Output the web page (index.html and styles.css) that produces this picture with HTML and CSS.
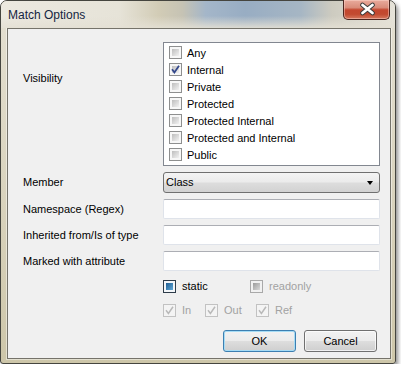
FILE: index.html
```html
<!DOCTYPE html>
<html lang="en">
	<head>
		<meta charset="UTF-8" />
		<title>Match Options</title>
		<link rel="stylesheet" href="styles.css">
	</head>
	<body>
		<div class="window">
			<div class="titlebar">
				<span class="title">Match Options</span>
				<div class="close-btn">
					<svg width="47" height="19" viewBox="0 0 47 19">
						<path d="M18.5 5 L28.5 13 M28.5 5 L18.5 13" stroke="#3b3b3b" stroke-width="4.8" stroke-linecap="round" />
						<path d="M18.5 5 L28.5 13 M28.5 5 L18.5 13" stroke="#ffffff" stroke-width="2.8" stroke-linecap="round" />
					</svg>
				</div>
			</div>
			<div class="client">
				<div class="form">
					<span class="field-label vis-label">Visibility</span>
					<div class="listbox">
						<div class="list-item"><span class="cb"></span>Any</div>
						<div class="list-item"><span class="cb checked"><svg viewBox="0 0 13 13"><path d="M3 6.3 L5.4 9.4 L10 2.8" /></svg></span>Internal</div>
						<div class="list-item"><span class="cb"></span>Private</div>
						<div class="list-item"><span class="cb"></span>Protected</div>
						<div class="list-item"><span class="cb"></span>Protected Internal</div>
						<div class="list-item"><span class="cb"></span>Protected and Internal</div>
						<div class="list-item"><span class="cb"></span>Public</div>
					</div>

					<span class="field-label">Member</span>
					<div class="combo">Class<span class="arrow"></span></div>

					<span class="field-label">Namespace (Regex)</span>
					<div class="textbox"></div>

					<span class="field-label">Inherited from/Is of type</span>
					<div class="textbox"></div>

					<span class="field-label">Marked with attribute</span>
					<div class="textbox"></div>
				</div>

				<div class="options">
					<div class="opt-row">
						<div class="opt w-static"><span class="cb indeterminate"></span>static</div>
						<div class="opt disabled"><span class="cb indeterminate"></span>readonly</div>
					</div>
					<div class="opt-row">
						<div class="opt disabled w-in"><span class="cb checked"><svg viewBox="0 0 13 13"><path d="M3 6.3 L5.4 9.4 L10 2.8" /></svg></span>In</div>
						<div class="opt disabled w-out"><span class="cb checked"><svg viewBox="0 0 13 13"><path d="M3 6.3 L5.4 9.4 L10 2.8" /></svg></span>Out</div>
						<div class="opt disabled"><span class="cb checked"><svg viewBox="0 0 13 13"><path d="M3 6.3 L5.4 9.4 L10 2.8" /></svg></span>Ref</div>
					</div>
				</div>

				<div class="buttons">
					<div class="button default">OK</div>
					<div class="button">Cancel</div>
				</div>
			</div>
		</div>
	</body>
</html>
```

FILE: styles.css
```css
body {
	margin: 0;
	background: #ffffff;
	font-family: 'Liberation Sans', Arial, sans-serif;
	font-size: 11px;
	color: #000;
}
.window {
	position: relative;
	width: 396px;
	height: 364px;
	box-sizing: border-box;
	border: 1px solid #45453f;
	border-radius: 7px 7px 3px 3px;
	background: linear-gradient(180deg, #e4e0d2 0%, #d9d3bd 55%, #cdc6a9 100%);
	box-shadow: 2px 3px 4px rgba(0, 0, 0, 0.45);
	display: flex;
	flex-direction: column;
}
.titlebar {
	position: relative;
	height: 27px;
	border-radius: 6px 6px 0 0;
	background:
		linear-gradient(180deg, rgba(233, 230, 220, 0) 0%, rgba(233, 230, 220, 0) 55%, rgba(228, 224, 212, 0.9) 100%),
		linear-gradient(90deg, #ece9e0 0%, #e6e3d8 30%, #d2ccb6 40%, #c6c3b4 46%, #a4b6c9 52%, #98adc3 62%, #a6b6c4 76%, #cdcbc0 84%, #e6e3d9 100%);
}
.title {
	display: block;
	padding: 7px 0 0 7px;
	font-size: 12px;
	line-height: 14px;
	color: #14253f;
}
.close-btn {
	position: absolute;
	top: -1px;
	right: 5px;
	width: 47px;
	height: 20px;
	box-sizing: border-box;
	border: 1px solid #4c2620;
	border-top: none;
	border-radius: 0 0 5px 5px;
	background: linear-gradient(180deg, #e9ab9d 0%, #d98c7a 40%, #c4472f 52%, #c24a30 75%, #d6795f 100%);
	box-shadow: inset 0 0 0 1px rgba(255, 220, 210, 0.45);
}
.close-btn svg {
	display: block;
}
.client {
	flex: 1;
	margin: 0 4px 4px 6px;
	border: 1px solid #75736a;
	background: #f0f0f0;
	box-shadow: 0 0 0 1px rgba(255, 255, 255, 0.45);
}
.form {
	display: grid;
	grid-template-columns: 140px 217px;
	row-gap: 6px;
	padding: 13px 0 0 15px;
}
.field-label {
	align-self: center;
	line-height: 13px;
}
.vis-label {
	align-self: start;
	padding-top: 30px;
}
.listbox {
	height: 124px;
	box-sizing: border-box;
	border: 1px solid #828790;
	background: #ffffff;
	padding: 1px 0 0 5px;
}
.list-item {
	display: flex;
	align-items: center;
	gap: 5px;
	height: 17px;
}
.cb {
	position: relative;
	flex: none;
	width: 13px;
	height: 13px;
	box-sizing: border-box;
	border: 1px solid #8e8f8f;
	padding: 2px;
	background:
		linear-gradient(135deg, #bdbdbd, #f2f2f2) content-box,
		linear-gradient(#f7f7f7, #f7f7f7) border-box;
}
.cb svg {
	position: absolute;
	left: -1px;
	top: -1px;
	width: 13px;
	height: 13px;
}
.cb svg path {
	fill: none;
	stroke: #34488c;
	stroke-width: 1.8;
}
.combo {
	position: relative;
	height: 21px;
	box-sizing: border-box;
	border: 1px solid #707070;
	border-radius: 3px;
	background: linear-gradient(180deg, #f4f4f4 0%, #ebebeb 48%, #dddddd 52%, #d2d2d2 100%);
	padding-left: 2px;
	line-height: 19px;
}
.arrow {
	position: absolute;
	right: 6px;
	top: 8px;
	border-left: 3.5px solid transparent;
	border-right: 3.5px solid transparent;
	border-top: 4px solid #000;
}
.textbox {
	height: 20px;
	box-sizing: border-box;
	border: 1px solid #dfe3ea;
	border-top-color: #acaeb4;
	border-radius: 2px;
	background: #ffffff;
}
.options {
	margin: 9px 0 0 155px;
	display: flex;
	flex-direction: column;
	gap: 11px;
}
.opt-row {
	display: flex;
	height: 13px;
}
.opt {
	display: flex;
	align-items: center;
	gap: 6px;
	line-height: 13px;
}
.w-static {
	width: 87px;
}
.w-in {
	width: 42px;
}
.w-out {
	width: 51px;
}
.opt.disabled {
	color: #a2a2a2;
}
.opt.disabled .cb {
	border-color: #c2c2c2;
	background: #f4f4f4;
}
.opt.disabled .cb svg path {
	stroke: #b9b9b9;
	stroke-width: 1.5;
}
.cb.indeterminate {
	border-color: #2e3c4a;
	background:
		linear-gradient(135deg, #1f5d92, #5fa8d8) content-box,
		linear-gradient(#f3f6f9, #f3f6f9) border-box;
}
.opt.disabled .cb.indeterminate {
	border-color: #a9a9a9;
	background:
		linear-gradient(135deg, #9b9b9b, #d9d9d9) content-box,
		linear-gradient(#f1f1f1, #f1f1f1) border-box;
}
.buttons {
	display: flex;
	justify-content: flex-end;
	gap: 8px;
	margin: 13px 13px 0 0;
}
.button {
	width: 73px;
	height: 22px;
	box-sizing: border-box;
	border: 1px solid #707070;
	border-radius: 3px;
	background: linear-gradient(180deg, #f2f2f2 0%, #ebebeb 48%, #dddddd 52%, #cfcfcf 100%);
	box-shadow: inset 0 0 0 1px rgba(255, 255, 255, 0.7);
	text-align: center;
	line-height: 20px;
}
.button.default {
	border-color: #3c7fb1;
	box-shadow: inset 0 0 0 1px #a6dcf5;
}
```
